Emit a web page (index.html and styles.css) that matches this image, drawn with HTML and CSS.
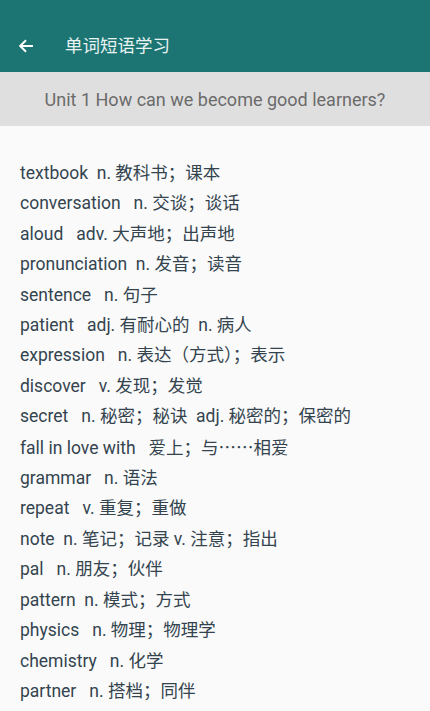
FILE: index.html
```html
<!DOCTYPE html>
<html lang="zh-CN">
<head>
<meta charset="utf-8">
<title>单词短语学习</title>
<link rel="stylesheet" href="styles.css">
</head>
<body>
<div class="app">
  <header class="toolbar">
    <svg class="back" width="16" height="16" viewBox="0 0 16 16" aria-hidden="true">
      <path d="M15 8H2.5M8 2.2L2.2 8L8 13.8" fill="none" stroke="#ffffff" stroke-width="2"/>
    </svg>
    <h1 class="title">单词短语学习</h1>
  </header>
  <div class="unit">Unit 1 How can we become good learners?</div>
  <ul class="words">
    <li>textbook  n. 教科书；课本</li>
    <li>conversation   n. 交谈；谈话</li>
    <li>aloud   adv. 大声地；出声地</li>
    <li>pronunciation  n. 发音；读音</li>
    <li>sentence   n. 句子</li>
    <li>patient   adj. 有耐心的  n. 病人</li>
    <li>expression   n. 表达（方式）；表示</li>
    <li>discover   v. 发现；发觉</li>
    <li>secret   n. 秘密；秘诀  adj. 秘密的；保密的</li>
    <li>fall in love with   爱上；与<span class="cjk">……</span>相爱</li>
    <li>grammar   n. 语法</li>
    <li>repeat   v. 重复；重做</li>
    <li>note  n. 笔记；记录 v. 注意；指出</li>
    <li>pal   n. 朋友；伙伴</li>
    <li>pattern  n. 模式；方式</li>
    <li>physics   n. 物理；物理学</li>
    <li>chemistry   n. 化学</li>
    <li>partner   n. 搭档；同伴</li>
  </ul>
</div>
</body>
</html>
```
FILE: styles.css
```css
* { box-sizing: border-box; }
html, body { margin: 0; padding: 0; }
body {
  width: 430px;
  height: 711px;
  overflow: hidden;
  background: #fafafa;
  font-family: Roboto, "Noto Sans CJK SC", sans-serif;
}
.app { display: flex; flex-direction: column; }
.toolbar {
  height: 72px;
  background: #1c7572;
  display: flex;
  align-items: flex-end;
  padding: 0 0 14px 18px;
}
.back { display: block; margin-bottom: 4px; }
.title {
  margin: 0 0 0 31px;
  font-size: 17.5px;
  font-weight: 400;
  color: #e8f3f2;
  line-height: 24px;
}
.unit {
  height: 54px;
  background: #e0dfdf;
  color: #6b6b6b;
  font-size: 18px;
  display: flex;
  align-items: center;
  justify-content: center;
}
.words {
  list-style: none;
  margin: 0;
  padding: 32px 0 0 20px;
}
.words li {
  white-space: pre;
  font-size: 17.5px;
  line-height: 30.4px;
  color: #34444f;
}
.cjk {
  font-family: "Noto Sans CJK SC", sans-serif;
}
```
